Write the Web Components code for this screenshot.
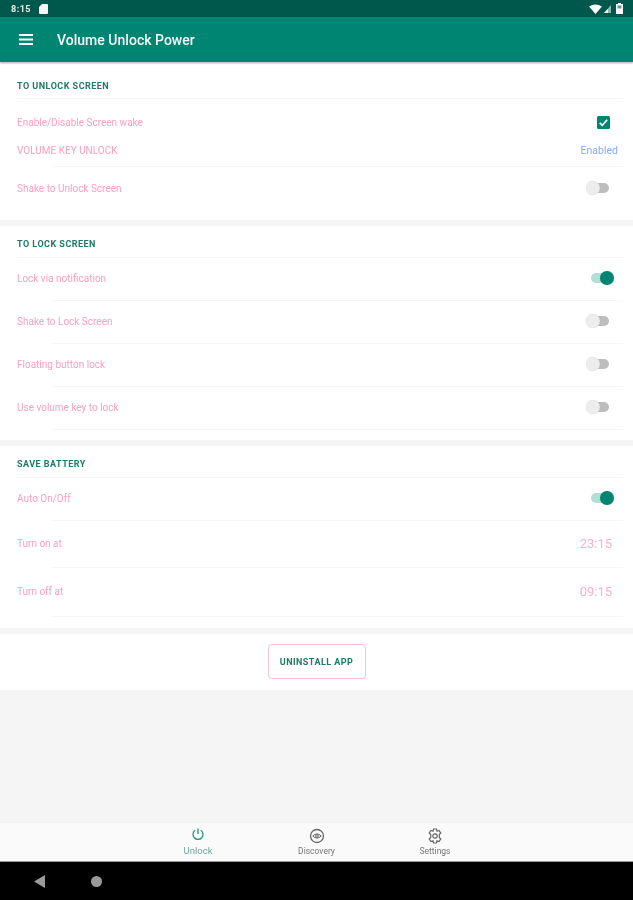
<!DOCTYPE html>
<html>
<head>
<meta charset="utf-8">
<title>Volume Unlock Power</title>
<style>
  html, body { margin: 0; height: 100%; }
  body { font-family: Roboto, "Liberation Sans", sans-serif; background: #f5f5f5; }
  unlock-app { filter: blur(0.45px); }
</style>
</head>
<body>
<unlock-app>
  <status-bar></status-bar>
  <app-bar>Volume Unlock Power</app-bar>

  <settings-section heading="TO UNLOCK SCREEN" style="--head-h: 35px; --head-top: 10px; --bottom: 10px">
    <setting-row plain style="--row-h: 37px; --row-top: 9px; --row-bottom: 0px">
      Enable/Disable Screen wake
      <check-box slot="control"></check-box>
    </setting-row>
    <setting-row style="--row-h: 31px">
      VOLUME KEY UNLOCK
      <row-value slot="control" kind="link">Enabled</row-value>
    </setting-row>
    <setting-row plain style="--row-bottom: 1px"><span>Shake to Unlock Screen</span><toggle-switch slot="control"></toggle-switch></setting-row>
  </settings-section>

  <settings-section heading="TO LOCK SCREEN" style="--bottom: 10px">
    <setting-row>Lock via notification<toggle-switch slot="control" on></toggle-switch></setting-row>
    <setting-row>Shake to Lock Screen<toggle-switch slot="control"></toggle-switch></setting-row>
    <setting-row>Floating button lock<toggle-switch slot="control"></toggle-switch></setting-row>
    <setting-row>Use volume key to lock<toggle-switch slot="control"></toggle-switch></setting-row>
  </settings-section>

  <settings-section heading="SAVE BATTERY">
    <setting-row>Auto On/Off<toggle-switch slot="control" on></toggle-switch></setting-row>
    <setting-row style="--row-h: 47px">Turn on at<row-value slot="control" kind="time">23:15</row-value></setting-row>
    <setting-row style="--row-h: 49px">Turn off at<row-value slot="control" kind="time">09:15</row-value></setting-row>
  </settings-section>

  <uninstall-panel>UNINSTALL APP</uninstall-panel>

  <bottom-nav>
    <nav-item icon="power" active>Unlock</nav-item>
    <nav-item icon="eye">Discovery</nav-item>
    <nav-item icon="gear">Settings</nav-item>
  </bottom-nav>
  <system-nav></system-nav>
</unlock-app>

<script>
class UnlockApp extends HTMLElement {
  constructor() {
    super();
    this.attachShadow({ mode: "open" });
    this.shadowRoot.innerHTML = `
      <style>
        :host { display: flex; flex-direction: column; height: 900px; background: #f5f5f5; }
      </style>
      <slot></slot>`;
  }
}

class StatusBar extends HTMLElement {
  constructor() {
    super();
    this.attachShadow({ mode: "open" });
    this.shadowRoot.innerHTML = `
      <style>
        :host { display: flex; align-items: center; height: 17px; padding: 0 10px 0 11px; background: #00574b; color: #fff; }
        .time { font: 700 9px Roboto, sans-serif; letter-spacing: .5px; color: #e8f0ee; }
        svg { display: block; }
        .sd { margin-left: 8px; }
        .right { margin-left: auto; display: flex; align-items: center; gap: 2px; }
      </style>
      <span class="time">8:15</span>
      <svg class="sd" width="9" height="10" viewBox="0 0 9 10"><path d="M3 0H8a1 1 0 0 1 1 1V9a1 1 0 0 1-1 1H1a1 1 0 0 1-1-1V3z" fill="#f4f7f6"/></svg>
      <div class="right">
        <svg width="13" height="10" viewBox="0 0 13 10"><path d="M0 2.500Q6.500-1.500 13 2.500L6.500 10z" fill="#fff"/></svg>
        <svg width="7" height="8" viewBox="0 0 7 8"><path d="M7 0V8H0z" fill="#8fb5ae"/><path d="M4 4V8H0z" fill="#fff"/></svg>
        <svg style="margin-left:3px" width="7" height="11" viewBox="0 0 7 11"><path d="M2 0H5V1H7V11H0V1H2z" fill="#fff"/><rect x="1.500" y="2.500" width="4" height="3" fill="#5f9a8f"/></svg>
      </div>`;
  }
}

class AppBar extends HTMLElement {
  constructor() {
    super();
    this.attachShadow({ mode: "open" });
    this.shadowRoot.innerHTML = `
      <style>
        :host { display: flex; align-items: center; height: 45px; margin-bottom: 2px; padding-left: 19px; background: #008573; box-shadow: 0 1px 2px rgba(0,0,0,.28); position: relative; color: #fff; }
        svg { display: block; }
        .title { margin-left: 24px; font: 500 14px Roboto, sans-serif; letter-spacing: .02px; color: #f4fbfa; }
      </style>
      <svg width="14" height="11" viewBox="0 0 14 11"><path d="M0 0H14V2H0zM0 4.500H14V6.500H0zM0 9H14V11H0z" fill="#fff"/></svg>
      <span class="title"><slot></slot></span>`;
  }
}

class SettingsSection extends HTMLElement {
  constructor() {
    super();
    this.attachShadow({ mode: "open" });
    this.shadowRoot.innerHTML = `
      <style>
        :host { display: block; margin-bottom: 6px; padding-bottom: var(--bottom, 11px); background: #fff; }
        .head { display: flex; align-items: center; box-sizing: border-box; height: calc(var(--head-h, 32px) - 1px); padding: var(--head-top, 5px) 0 0 17px; font: 700 9px Roboto, sans-serif; letter-spacing: .48px; color: #1d7a68; }
        .rule { height: 1px; margin: 0 10px 0 17px; background: #f6f6f6; }
      </style>
      <div class="head"></div>
      <div class="rule"></div>
      <slot></slot>`;
    this.shadowRoot.querySelector(".head").textContent = this.getAttribute("heading");
  }
}

class SettingRow extends HTMLElement {
  constructor() {
    super();
    this.attachShadow({ mode: "open" });
    this.shadowRoot.innerHTML = `
      <style>
        :host { display: flex; flex-direction: column; height: var(--row-h, 43px); }
        .content { flex: 1; display: flex; align-items: center; justify-content: space-between; box-sizing: border-box; padding: var(--row-top, 0px) 0 var(--row-bottom, 2px) 17px; font: 400 10px Roboto, sans-serif; color: #f9a0c0; }
        .rule { height: 1px; margin: 0 10px 0 52px; background: #f5f5f5; }
        :host([plain]) .rule { display: none; }
      </style>
      <div class="content"><span><slot></slot></span><slot name="control"></slot></div>
      <div class="rule"></div>`;
  }
}

class ToggleSwitch extends HTMLElement {
  constructor() {
    super();
    this.attachShadow({ mode: "open" });
    this.shadowRoot.innerHTML = `
      <style>
        :host { display: flex; align-items: center; justify-content: center; width: 28px; height: 15px; margin-right: 19px; position: relative; }
        .track { width: 18px; height: 10px; border-radius: 5px; background: #bdbdbd; }
        .thumb { position: absolute; top: 0.500px; left: 0; width: 14px; height: 14px; border-radius: 50%; background: #ededed; box-shadow: 0 0 1px rgba(0,0,0,.2); }
        :host([on]) .track { background: #b2dfd5; }
        :host([on]) .thumb { left: auto; right: 0; background: #008573; }
      </style>
      <div class="track"></div>
      <div class="thumb"></div>`;
  }
}

class CheckBox extends HTMLElement {
  constructor() {
    super();
    this.attachShadow({ mode: "open" });
    this.shadowRoot.innerHTML = `
      <style>
        :host { display: block; width: 13px; height: 13px; margin-right: 23px; }
        svg { display: block; }
      </style>
      <svg width="13" height="13" viewBox="0 0 13 13">
        <rect width="13" height="13" rx="1.500" fill="#008573"/>
        <path d="M2.800 6.800L5.300 9.300L10.200 3.800" fill="none" stroke="#fff" stroke-width="1.700"/>
      </svg>`;
  }
}

class RowValue extends HTMLElement {
  constructor() {
    super();
    this.attachShadow({ mode: "open" });
    this.shadowRoot.innerHTML = `
      <style>
        :host { display: block; }
        :host([kind="link"]) { margin-right: 15px; font-size: 10.500px; color: #85acf6; }
        :host([kind="time"]) { margin-right: 21px; font-size: 13px; color: #f9b0ca; }
      </style>
      <slot></slot>`;
  }
}

class UninstallPanel extends HTMLElement {
  constructor() {
    super();
    this.attachShadow({ mode: "open" });
    this.shadowRoot.innerHTML = `
      <style>
        :host { display: flex; justify-content: center; align-items: flex-start; box-sizing: border-box; height: 56px; padding-top: 10px; background: #fff; }
        .btn { display: flex; align-items: center; justify-content: center; box-sizing: border-box; width: 98px; height: 35px; border: 1.500px solid #f8c0d4; border-radius: 4px; font: 700 9px Roboto, sans-serif; letter-spacing: .45px; color: #1d7a68; }
      </style>
      <div class="btn"><slot></slot></div>`;
  }
}

class BottomNav extends HTMLElement {
  constructor() {
    super();
    this.attachShadow({ mode: "open" });
    this.shadowRoot.innerHTML = `
      <style>
        :host { display: flex; justify-content: center; box-sizing: border-box; height: 39px; margin-top: auto; background: #fafafa; border-top: 1px solid #f1f1f1; }
      </style>
      <slot></slot>`;
  }
}

const NAV_ICONS = {
  power: `<path d="M8 2.500V8" /><path d="M5.200 4.300A5 5 0 1 0 10.800 4.300" />`,
  eye: `<circle cx="8" cy="8" r="6.500"/><path d="M3.800 8Q8 3.800 12.200 8Q8 12.200 3.800 8z" stroke-width="1"/><circle cx="8" cy="8" r="1.300" stroke-width="1"/>`,
  gear: `<path d="M6.500 1H9.500L10 3.200L12 2.500L13.800 5L12.300 6.600L12.300 9.400L13.800 11L12 13.500L10 12.800L9.500 15H6.500L6 12.800L4 13.500L2.200 11L3.700 9.400L3.700 6.600L2.200 5L4 2.500L6 3.200z" stroke-width="1.200"/><circle cx="8" cy="8" r="2.200" stroke-width="1.200"/>`
};

class NavItem extends HTMLElement {
  constructor() {
    super();
    this.attachShadow({ mode: "open" });
    this.shadowRoot.innerHTML = `
      <style>
        :host { display: flex; flex-direction: column; align-items: center; width: 118.500px; padding-top: 5px; color: #666; }
        :host([active]) { color: #1f9684; }
        :host([active]) svg { margin-top: -2px; margin-bottom: 2px; }
        svg { display: block; fill: none; stroke: currentColor; stroke-width: 1.300; }
        .label { margin-top: 2px; font: 400 8.500px/10px Roboto, sans-serif; color: #777; }
        :host([active]) .label { font-size: 9.500px; color: #6fa69b; }
      </style>
      <svg width="16" height="16" viewBox="0 0 16 16">${NAV_ICONS[this.getAttribute("icon")]}</svg>
      <span class="label"><slot></slot></span>`;
  }
}

class SystemNav extends HTMLElement {
  constructor() {
    super();
    this.attachShadow({ mode: "open" });
    this.shadowRoot.innerHTML = `
      <style>
        :host { display: flex; align-items: center; box-sizing: border-box; height: 39px; padding: 0 0 0 34px; background: #000; border-top: 1px solid #9a9a9a; }
        svg { display: block; }
        .home { width: 11px; height: 11px; margin-left: 46px; border-radius: 50%; background: #9a9a9a; }
      </style>
      <svg width="11" height="13" viewBox="0 0 11 13"><path d="M0 6.500L11 0V13z" fill="#9a9a9a"/></svg>
      <div class="home"></div>`;
  }
}

customElements.define("unlock-app", UnlockApp);
customElements.define("status-bar", StatusBar);
customElements.define("app-bar", AppBar);
customElements.define("settings-section", SettingsSection);
customElements.define("setting-row", SettingRow);
customElements.define("toggle-switch", ToggleSwitch);
customElements.define("check-box", CheckBox);
customElements.define("row-value", RowValue);
customElements.define("uninstall-panel", UninstallPanel);
customElements.define("bottom-nav", BottomNav);
customElements.define("nav-item", NavItem);
customElements.define("system-nav", SystemNav);
</script>
</body>
</html>
